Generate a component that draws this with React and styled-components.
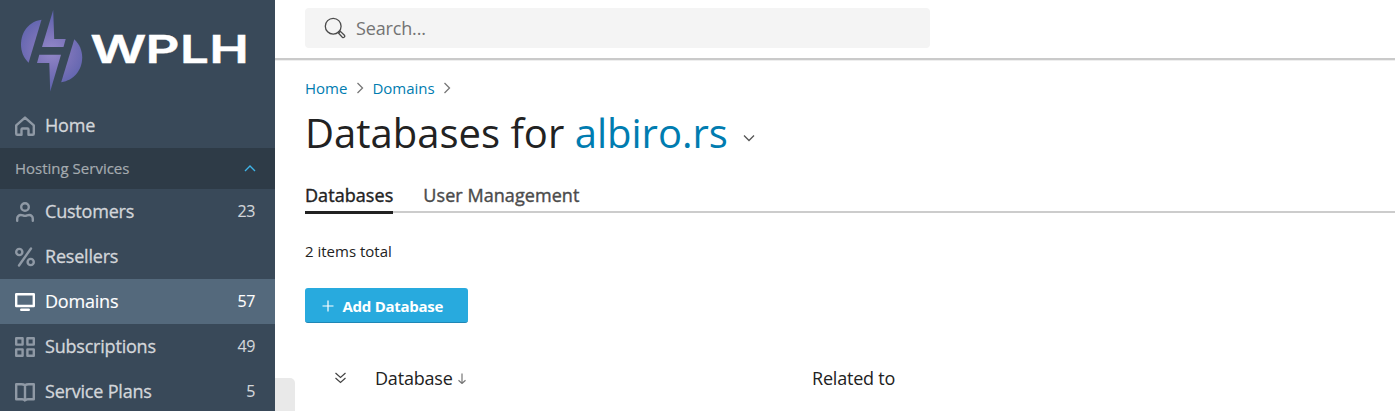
import React from "react";
import styled, {createGlobalStyle} from "styled-components";


const menuItems = [
    {name: 'Customers', icon: 'customers', count: 23},
    {name: 'Resellers', icon: 'resellers'},
    {name: 'Domains', icon: 'domains', count: 57, active: true},
    {name: 'Subscriptions', icon: 'subscriptions', count: 49},
    {name: 'Service Plans', icon: 'plans', count: 5},
]

const menuIcons = {
    home: <path d="M2.200 18.800a1 1 0 0 1-1-1V9.400L10 1.600l8.800 7.800v8.400a1 1 0 0 1-1 1h-4.300v-5.300a1 1 0 0 0-1-1h-5a1 1 0 0 0-1 1v5.300z"/>,
    customers: <>
        <circle cx="10" cy="5" r="3.800"/>
        <path d="M2.200 18.800v-2.100A3.600 3.600 0 0 1 5.800 13c1.700 0 2.400.9 4.200.9s2.500-.9 4.200-.9a3.600 3.600 0 0 1 3.600 3.700v2.100"/>
    </>,
    resellers: <>
        <circle cx="4.300" cy="5" r="3.100"/>
        <circle cx="15.700" cy="15" r="3.100"/>
        <path d="M16 1.500 4 18.500"/>
    </>,
    domains: <>
        <rect x="1.200" y="2.200" width="17.600" height="11.800"/>
        <path d="M6.200 17.700h7.600"/>
    </>,
    subscriptions: <>
        <rect x="1.200" y="1.200" width="6.400" height="6.400"/>
        <rect x="12.400" y="1.200" width="6.400" height="6.400"/>
        <rect x="1.200" y="12.400" width="6.400" height="6.400"/>
        <rect x="12.400" y="12.400" width="6.400" height="6.400"/>
    </>,
    plans: <path d="M10 3.300C9 2.500 7.800 2.200 6.300 2.200H1.200v15h6c1.300 0 2.100.3 2.800 1.200.7-.9 1.500-1.200 2.800-1.200h6v-15h-5.100C12.200 2.200 11 2.500 10 3.300zM10 3.300v15"/>,
}

const Logo = () => (
    <LogoSvg viewBox="0 0 275 103">
        <defs>
            <radialGradient id="mark" gradientUnits="userSpaceOnUse" cx="51.5" cy="51" r="40">
                <stop offset="0" stopColor="#9489c9"/>
                <stop offset="0.5" stopColor="#7972b8"/>
                <stop offset="1" stopColor="#5c62ad"/>
            </radialGradient>
        </defs>
        <g fill="url(#mark)">
            <path d="M41.500 19.800C29 21.500 21 32 21 44.500c0 7 2.500 13.500 7.600 18.200z"/>
            <path d="M53.200 10 42 47h21.500l2.200-8H54.200z"/>
            <path d="M39.300 54.800h21.700L50.200 91.500 49.300 63H37z"/>
            <path d="M74.300 39.200C79.500 44 82.200 50.500 82.200 57.500c0 12.500-8.500 23-21 24.700z"/>
        </g>
        <LogoText transform="translate(90.300 63.200) scale(1.430 1)">W</LogoText>
        <LogoText transform="translate(145.500 63.200) scale(1.370 1)">P</LogoText>
        <LogoText transform="translate(180 63.200) scale(1.330 1)">L</LogoText>
        <LogoText transform="translate(209.300 63.200) scale(1.380 1)">H</LogoText>
    </LogoSvg>
)

const MenuItem = ({name, icon, count, active}) => (
    <Item $active={active}>
        <ItemIcon viewBox="0 0 20 20" $active={active}>{menuIcons[icon]}</ItemIcon>
        <ItemName>{name}</ItemName>
        <Count>{count}</Count>
    </Item>
)

const App = () => {
    return (
        <Page>
            <GlobalStyle/>
            <Sidebar>
                <Logo/>
                <MenuItem name="Home" icon="home"/>
                <Section>
                    <SectionName>Hosting Services</SectionName>
                    <LineIcon width="12" height="8" viewBox="0 0 12 8" $color="#3fb4e8" $stroke={1.4}>
                        <path d="M1 6 6 1l5 5"/>
                    </LineIcon>
                </Section>
                {menuItems.map((item) => <MenuItem key={item.name} {...item}/>)}
            </Sidebar>
            <SidebarToggle/>
            <Main>
                <Header>
                    <Search>
                        <LineIcon width="22" height="22" viewBox="0 0 22 22" $color="#4b4b4b" $stroke={1.3}>
                            <circle cx="9.200" cy="9.200" r="7.900"/>
                            <path d="M14.600 16.200 16.400 14.400l4 3.800a1.500 1.500 0 0 1-2.100 2.100zM14.200 14.200l1.200 1.200"/>
                        </LineIcon>
                        Search...
                    </Search>
                </Header>
                <Content>
                    <Breadcrumbs>
                        <Link>Home</Link>
                        <Separator/>
                        <Link>Domains</Link>
                        <Separator/>
                    </Breadcrumbs>
                    <Title>
                        <span>Databases for <Link>albiro.rs</Link></span>
                        <LineIcon width="12" height="8" viewBox="0 0 12 8" $color="#555" $stroke={1.3}>
                            <path d="M1 1.500 6 6.500l5-5"/>
                        </LineIcon>
                    </Title>
                    <Tabs>
                        <Tab $active>Databases</Tab>
                        <Tab>User Management</Tab>
                    </Tabs>
                    <Total>2 items total</Total>
                    <AddButton>
                        <LineIcon width="12" height="12" viewBox="0 0 12 12" $color="#fff" $stroke={1.2}>
                            <path d="M6 .5v11M.5 6h11"/>
                        </LineIcon>
                        Add Database
                    </AddButton>
                    <TableHead>
                        <LineIcon width="12" height="12" viewBox="0 0 12 12" $color="#444" $stroke={1.2}>
                            <path d="m.5 1 5 4.500L10.500 1M.5 6l5 4.500L10.500 6"/>
                        </LineIcon>
                        <Column>
                            Database
                            <LineIcon width="10" height="12" viewBox="0 0 10 12" $color="#777" $stroke={1.2}>
                                <path d="M5 1.500v10M1.500 8.300 5 11.500l3.500-3.200"/>
                            </LineIcon>
                        </Column>
                        <Column>Related to</Column>
                    </TableHead>
                </Content>
            </Main>
        </Page>
    )
}

const Separator = () => (
    <LineIcon width="8" height="12" viewBox="0 0 8 12" $color="#777" $stroke={1.3}>
        <path d="m1.500 1 5 5-5 5"/>
    </LineIcon>
)


const GlobalStyle = createGlobalStyle`
  * {
    box-sizing: border-box;
  }
  body {
    margin: 0;
    font-family: "Open Sans", sans-serif;
    color: #222;
    background: #fff;
  }
`

const Page = styled.div`
  position: relative;
  display: flex;
  height: 411px;
  overflow: hidden;
`

const Sidebar = styled.nav`
  flex: 0 0 275px;
  background: #394959;
`

const SidebarToggle = styled.div`
  position: absolute;
  left: 275px;
  bottom: 0;
  width: 20px;
  height: 33px;
  border-radius: 0 5px 0 0;
  background: #e9e9e9;
`

const LogoSvg = styled.svg`
  display: block;
  width: 275px;
  height: 103px;
`

const LogoText = styled.text`
  font-family: Inter, sans-serif;
  font-size: 38.5px;
  font-weight: 600;
  fill: #fff;
  stroke: #fff;
  stroke-width: 0.4px;
`

const Item = styled.div`
  display: flex;
  align-items: center;
  height: 45px;
  padding: 0 20px 1px 15px;
  font-size: 18px;
  letter-spacing: -0.2px;
  color: ${p => p.$active ? '#fff' : '#d3d6da'};
  -webkit-text-stroke: ${p => p.$active ? '0.15px' : '0.3px'};
  background: ${p => p.$active ? '#54697c' : 'transparent'};
`

const ItemIcon = styled.svg`
  width: 20px;
  height: 20px;
  margin: 2px 10px 0 0;
  fill: none;
  stroke: ${p => p.$active ? '#fff' : '#8f99a5'};
  stroke-width: 2.4;
  stroke-linecap: round;
  stroke-linejoin: round;
`

const ItemName = styled.span`
  flex: 1;
`

const Count = styled.span`
  font-size: 16px;
  letter-spacing: -0.4px;
  -webkit-text-stroke: 0.1px;
`

const Section = styled.div`
  display: flex;
  align-items: center;
  justify-content: space-between;
  height: 41px;
  padding: 0 19px 0 15px;
  font-size: 15px;
  color: #a5abb0;
  background: #2e3b47;
`

const SectionName = styled.span`
  padding-bottom: 2px;
  -webkit-text-stroke: 0.2px;
`

const LineIcon = styled.svg`
  flex: none;
  fill: none;
  stroke: ${p => p.$color};
  stroke-width: ${p => p.$stroke};
`

const Main = styled.main`
  flex: 1;
`

const Header = styled.header`
  height: 60px;
  padding: 8px 30px 0;
  border-bottom: 2px solid #cacaca;
  box-shadow: 0 1px 0 #eee;
`

const Search = styled.div`
  display: flex;
  align-items: center;
  gap: 10px;
  width: 625px;
  height: 40px;
  padding-left: 19px;
  border-radius: 4px;
  font-size: 18px;
  letter-spacing: -0.15px;
  color: #737373;
  background: #f4f4f4;
`

const Content = styled.div`
  padding: 16px 0 0 30px;
`

const Breadcrumbs = styled.div`
  display: flex;
  align-items: center;
  gap: 8.5px;
  height: 24px;
  font-size: 15px;
`

const Link = styled.a`
  color: #007cb0;
`

const Title = styled.h1`
  display: flex;
  align-items: center;
  gap: 15px;
  height: 67px;
  margin: 0;
  padding-bottom: 3px;
  font-size: 40px;
  font-weight: 400;

  svg {
    margin-top: 11px;
  }
`

const Tabs = styled.div`
  display: flex;
  gap: 30px;
  height: 46px;
  box-shadow: inset 0 -2px 0 #ccc;
`

const Tab = styled.div`
  height: 47px;
  padding-top: 16px;
  font-size: 18px;
  line-height: 25px;
  letter-spacing: 0.06px;
  -webkit-text-stroke: 0.4px;
  color: ${p => p.$active ? '#222' : '#4b4b4b'};
  border-bottom: ${p => p.$active ? '3px solid #222' : 'none'};
`

const Total = styled.div`
  padding-top: 28px;
  font-size: 15px;
  line-height: 21px;
`

const AddButton = styled.button`
  display: flex;
  align-items: center;
  gap: 8.5px;
  width: 163px;
  height: 35px;
  margin-top: 26px;
  padding: 2px 0 0 17px;
  border: none;
  border-bottom: 1px solid #1f86b5;
  border-radius: 3px;
  font-family: inherit;
  font-size: 15px;
  font-weight: 700;
  letter-spacing: -0.27px;
  color: #fff;
  background: #28aade;
`

const TableHead = styled.div`
  display: grid;
  grid-template-columns: 40px 437px 1fr;
  align-items: center;
  height: 50px;
  margin-top: 30px;
  padding-left: 30px;
  font-size: 18px;
  letter-spacing: -0.2px;
`

const Column = styled.div`
  display: flex;
  align-items: center;
  gap: 4px;
`

export default App;
